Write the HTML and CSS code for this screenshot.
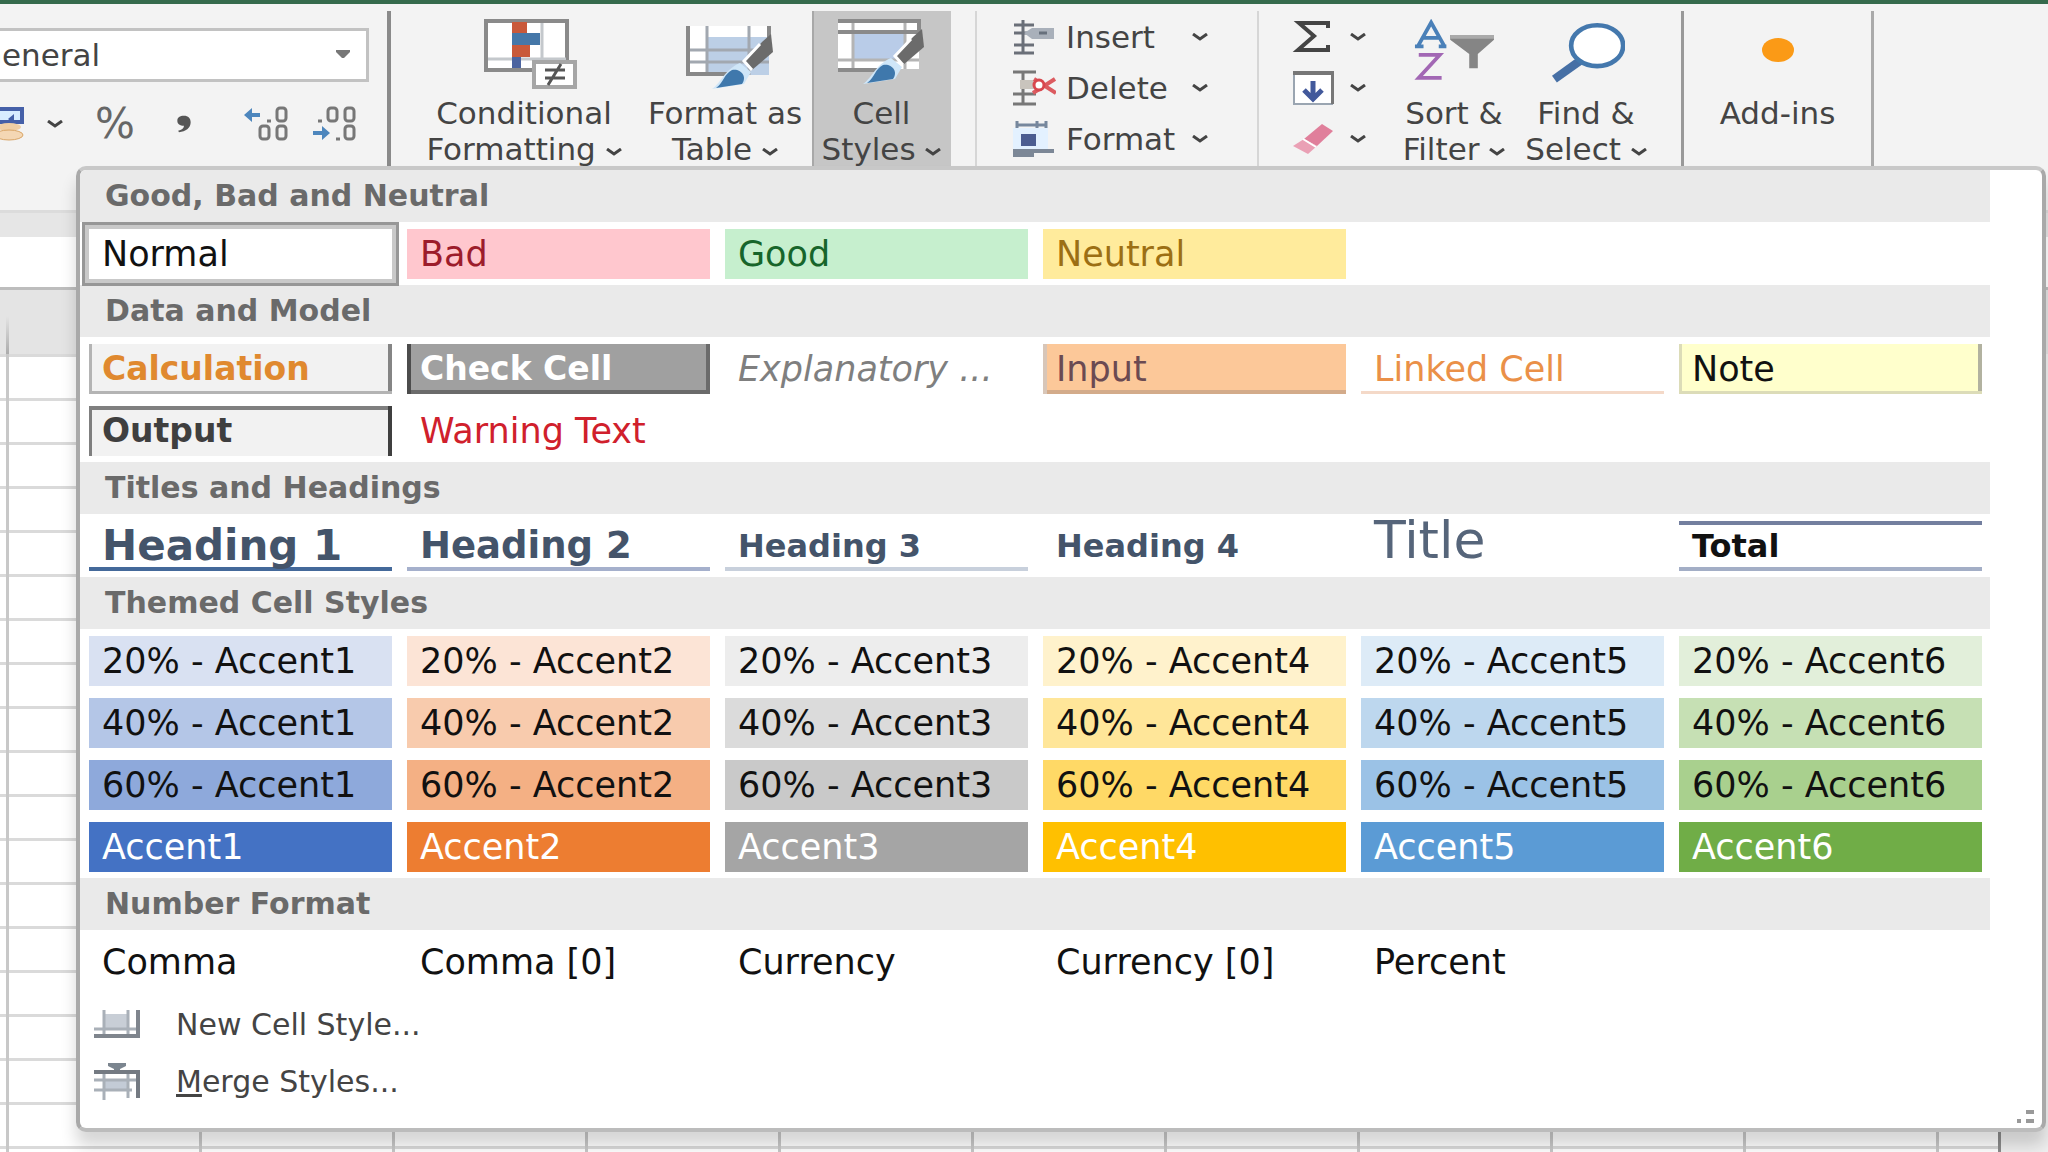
FILE: index.html
```html
<!DOCTYPE html>
<html lang="en">

<head>
    <meta charset="UTF-8">
    <title>Cell Styles</title>
    <meta name="viewport" content="width=device-width, initial-scale=1.0">
    <link rel="stylesheet" href="styles.css">
</head>

<body>
    <svg class="defs" width="0" height="0" aria-hidden="true">
        <symbol id="chevron" viewBox="0 0 16 8">
            <path d="M1 1 L8 6 L15 1" fill="none" stroke="#444" stroke-width="3" />
        </symbol>
        <symbol id="brush" viewBox="0 0 64 60">
            <path d="M61 2 L63 20 L42 38 L34 30 L52 10 Z" fill="#6b6b6b" />
            <path d="M50 12 L34 29 L42 38" fill="none" stroke="#fff" stroke-width="3" />
            <path d="M30 31 L41 40 L34 52 L2 57 C12 50 14 38 30 31 Z" fill="#cfe6f8" />
            <path d="M22 38 C30 36 38 44 32 52 L6 56 C14 50 14 42 22 38 Z" fill="#3f78ac" />
        </symbol>
    </svg>

    <header class="ribbon">
        <div class="group number-group">
            <div class="format-box">
                <select class="number-format" aria-label="Number format">
                    <option>General</option>
                </select>
                <svg class="format-arrow" width="14" height="8" viewBox="0 0 14 8">
                    <path d="M0 0 H14 V2 L8 8 H6 L0 2 Z" fill="#777" />
                </svg>
            </div>
            <div class="number-tools">
                <button type="button" class="tool" aria-label="Accounting format">
                    <svg width="24" height="34" viewBox="0 0 24 34">
                        <path d="M0 2 H22 V15 H0" fill="#d8ecff" stroke="#4560a8" stroke-width="4" />
                        <path d="M8 12 L14 7 V17 Z" fill="#4560a8" />
                        <ellipse cx="9" cy="20" rx="12" ry="4" fill="#f0cfa5" />
                        <ellipse cx="9" cy="28" rx="14" ry="5" fill="#f4d7b4" stroke="#d9a566" />
                    </svg>
                </button>
                <button type="button" class="tool" aria-label="More accounting formats"><svg class="chevron"><use href="#chevron" /></svg></button>
                <button type="button" class="tool percent">%</button>
                <button type="button" class="tool comma" aria-label="Comma style">
                    <svg width="20" height="20" viewBox="0 0 20 24">
                        <path d="M10 2 C15 2 18 5 18 10 C18 17 12 21 4 22 L3 20 C7 19 10 17 10 14 C5 14 2 12 2 8 C2 4 5 2 10 2 Z" fill="#555" />
                    </svg>
                </button>
                <button type="button" class="tool" aria-label="Increase decimal">
                    <svg width="48" height="36" viewBox="0 0 48 36">
                        <path d="M2 9 L10 2 V7 H18 V11 H10 V16 Z" fill="#4d86bd" />
                        <g fill="none" stroke="#777" stroke-width="3">
                            <path d="M25 15 H29" />
                            <rect x="35" y="2" width="9" height="13" rx="3" />
                            <rect x="18" y="20" width="9" height="13" rx="3" />
                            <rect x="35" y="20" width="9" height="13" rx="3" />
                        </g>
                    </svg>
                </button>
                <button type="button" class="tool" aria-label="Decrease decimal">
                    <svg width="48" height="36" viewBox="0 0 48 36">
                        <path d="M20 27 L12 20 V25 H3 V29 H12 V34 Z" fill="#4d86bd" />
                        <g fill="none" stroke="#777" stroke-width="3">
                            <path d="M8 15 H12 M26 33 H30" />
                            <rect x="18" y="2" width="9" height="13" rx="3" />
                            <rect x="35" y="2" width="9" height="13" rx="3" />
                            <rect x="35" y="20" width="9" height="13" rx="3" />
                        </g>
                    </svg>
                </button>
            </div>
        </div>

        <div class="group styles-group">
            <button type="button" class="big conditional">
                <span class="icon conditional-icon">
                    <svg width="94" height="70" viewBox="0 0 94 70">
                        <rect x="2" y="2" width="81" height="49" fill="#fff" stroke="#8a8a8a" stroke-width="4" />
                        <path d="M58 4 V48 M4 40 H82" stroke="#c4c8cc" stroke-width="3" />
                        <path d="M28 3 H43 V14 H28 Z M28 26 H46 V38 H28 Z" fill="#c9593a" />
                        <path d="M28 14 H56 V26 H28 Z" fill="#4577a8" />
                        <path d="M28 38 H37 V49 H28 Z" fill="#4c64a0" />
                        <rect x="50" y="43" width="41" height="25" fill="#fff" stroke="#a6a6a6" stroke-width="4" />
                        <path d="M61 51 H81 M61 59 H81 M77 45 L64 66" stroke="#555" stroke-width="3" />
                    </svg>
                </span>
                <span>Conditional</span>
                <span>Formatting <svg class="chevron"><use href="#chevron" /></svg></span>
            </button>
            <button type="button" class="big format-table">
                <span class="icon table-icon">
                    <svg width="90" height="70" viewBox="0 0 90 70">
                        <path d="M3 7 H84 V56 H3 Z" fill="#fff" />
                        <path d="M23 18 H84 V56 H23 Z" fill="#bccfe6" />
                        <path d="M22 7 V56 M64 7 V56 M3 31 H84 M3 43 H84" stroke="#a2a8b0" stroke-width="3" />
                        <path d="M3 7 V55 H60 M84 7 V30" fill="none" stroke="#888" stroke-width="4" />
                        <use href="#brush" x="25" y="13" width="64" height="60" />
                    </svg>
                </span>
                <span>Format as</span>
                <span>Table <svg class="chevron"><use href="#chevron" /></svg></span>
            </button>
            <button type="button" class="big cell-styles active" aria-expanded="true">
                <span class="icon">
                    <svg width="90" height="70" viewBox="0 0 90 70">
                        <path d="M1 2 H82 V50 H1 Z" fill="#fff" />
                        <path d="M17 13 H68 V41 H17 Z" fill="#b9cce8" />
                        <path d="M16 2 V50 M68 2 V50 M1 41 H82" stroke="#b4b4b4" stroke-width="3" />
                        <path d="M1 2 H82 V30 M1 13 H82 M1 51 H54" fill="none" stroke="#8a8a8a" stroke-width="4" />
                        <use href="#brush" x="24" y="8" width="64" height="60" />
                    </svg>
                </span>
                <span>Cell</span>
                <span>Styles <svg class="chevron"><use href="#chevron" /></svg></span>
            </button>
        </div>

        <div class="group cells-group">
            <button type="button" class="small">
                <svg width="44" height="36" viewBox="0 0 44 36">
                    <path d="M2 6 H22 M2 14 H22 M2 26 H22 M2 34 H22 M11 1 V35" stroke="#6a6f78" stroke-width="3" fill="none" />
                    <path d="M20 9 H42 V20 H20 L12 14 Z" fill="#a9b0ba" />
                    <path d="M27 14 H35" stroke="#67707c" stroke-width="3" />
                </svg>
                <span>Insert</span>
                <svg class="chevron"><use href="#chevron" /></svg>
            </button>
            <button type="button" class="small">
                <svg width="44" height="36" viewBox="0 0 44 36">
                    <path d="M1 2 H24 M1 24 H24 M1 34 H24 M11 2 V35" stroke="#777" stroke-width="3" fill="none" />
                    <path d="M8 10 H24 V19 H8 Z" fill="#c9c4bd" />
                    <path d="M22 9 L44 23 M43 9 L21 23" stroke="#dc5b60" stroke-width="4" />
                    <circle cx="27" cy="15" r="5" fill="#fff" stroke="#d8474e" stroke-width="3" />
                </svg>
                <span>Delete</span>
                <svg class="chevron"><use href="#chevron" /></svg>
            </button>
            <button type="button" class="small">
                <svg width="44" height="38" viewBox="0 0 44 38">
                    <path d="M1 8 H36 V30 H1 Z" fill="#e3f1ff" />
                    <path d="M4 5 H34 M5 1 V8 M25 1 V8 M34 1 V8" stroke="#76879d" stroke-width="3" />
                    <rect x="9" y="14" width="15" height="12" fill="#4c5d91" />
                    <path d="M1 31 H42 M1 35 H22" stroke="#7c8796" stroke-width="4" />
                </svg>
                <span>Format</span>
                <svg class="chevron"><use href="#chevron" /></svg>
            </button>
        </div>

        <div class="group editing-group">
            <div class="editing-tools">
                <button type="button" class="small" aria-label="AutoSum">
                    <svg width="42" height="36" viewBox="0 0 42 36">
                        <path d="M36 9 V4 H7 L22 17 L6 31 H36 V26" fill="none" stroke="#444" stroke-width="4" />
                    </svg>
                    <svg class="chevron"><use href="#chevron" /></svg>
                </button>
                <button type="button" class="small" aria-label="Fill">
                    <svg width="42" height="36" viewBox="0 0 42 36">
                        <rect x="2" y="3" width="38" height="31" fill="#fff" stroke="#9aa5b1" stroke-width="2" />
                        <path d="M1 3 H41 V34" fill="none" stroke="#777" stroke-width="4" />
                        <path d="M21 11 V29 M12 20 L21 29 L30 20" fill="none" stroke="#42599b" stroke-width="5" />
                    </svg>
                    <svg class="chevron"><use href="#chevron" /></svg>
                </button>
                <button type="button" class="small" aria-label="Clear">
                    <svg width="42" height="36" viewBox="0 0 42 36">
                        <path d="M30 3 L41 10 L25 25 L12 18 Z" fill="#e07f9b" />
                        <path d="M12 18 L25 25 L16 33 L1 25 Z" fill="#eaa0b5" />
                        <path d="M11 18 L24 26" stroke="#fff" stroke-width="2" />
                    </svg>
                    <svg class="chevron"><use href="#chevron" /></svg>
                </button>
            </div>
            <button type="button" class="big sort">
                <span class="icon">
                    <svg width="80" height="70" viewBox="0 0 84 70">
                        <path d="M4 27 L18 2 L32 27 M9 18 H27 M1 27 H10 M26 27 H34" fill="none" stroke="#4a80b8" stroke-width="4" />
                        <path d="M5 36 H27 L5 60 H29" fill="none" stroke="#a267b4" stroke-width="4" />
                        <path d="M38 15 H84 V20 L67 35 V50 H58 V35 L38 20 Z" fill="#858585" />
                        <path d="M38 17 H84" stroke="#aaa" stroke-width="4" />
                    </svg>
                </span>
                <span>Sort &amp;</span>
                <span>Filter <svg class="chevron"><use href="#chevron" /></svg></span>
            </button>
            <button type="button" class="big find">
                <span class="icon">
                    <svg width="78" height="70" viewBox="-2 0 84 70">
                        <path d="M34 42 L6 62" stroke="#466fa5" stroke-width="9" />
                        <ellipse cx="52" cy="26" rx="28" ry="22" fill="#fff" stroke="#4478ad" stroke-width="5" />
                    </svg>
                </span>
                <span>Find &amp;</span>
                <span>Select <svg class="chevron"><use href="#chevron" /></svg></span>
            </button>
        </div>

        <div class="group addins-group">
            <button type="button" class="big addins">
                <span class="icon">
                    <svg width="40" height="70" viewBox="0 0 40 70">
                        <ellipse cx="20" cy="31" rx="16" ry="12" fill="#fb9a16" />
                    </svg>
                </span>
                <span>Add-ins</span>
            </button>
        </div>
    </header>

    <main class="sheet">
        <div class="ribbon-foot"></div>
        <div class="spacer-bar"></div>
        <div class="formula-bar"></div>
        <div class="column-header"></div>
        <div class="grid">
            <div class="scrollbar"></div>
        </div>
    </main>

    <div class="popup">
        <div class="gallery">
            <h2>Good, Bad and Neutral</h2>
            <div class="cells">
                <button type="button" class="cell selected">Normal</button>
                <button type="button" class="cell bad">Bad</button>
                <button type="button" class="cell good">Good</button>
                <button type="button" class="cell neutral">Neutral</button>
            </div>

            <h2>Data and Model</h2>
            <div class="cells">
                <button type="button" class="cell calculation">Calculation</button>
                <button type="button" class="cell check">Check Cell</button>
                <button type="button" class="cell explanatory">Explanatory ...</button>
                <button type="button" class="cell input">Input</button>
                <button type="button" class="cell linked">Linked Cell</button>
                <button type="button" class="cell note">Note</button>
                <button type="button" class="cell output">Output</button>
                <button type="button" class="cell warning">Warning Text</button>
            </div>

            <h2>Titles and Headings</h2>
            <div class="cells">
                <button type="button" class="cell heading1">Heading 1</button>
                <button type="button" class="cell heading2">Heading 2</button>
                <button type="button" class="cell heading3">Heading 3</button>
                <button type="button" class="cell heading4">Heading 4</button>
                <button type="button" class="cell title">Title</button>
                <button type="button" class="cell total">Total</button>
            </div>

            <h2>Themed Cell Styles</h2>
            <div class="cells">
                <button type="button" class="cell a1-20">20% - Accent1</button>
                <button type="button" class="cell a2-20">20% - Accent2</button>
                <button type="button" class="cell a3-20">20% - Accent3</button>
                <button type="button" class="cell a4-20">20% - Accent4</button>
                <button type="button" class="cell a5-20">20% - Accent5</button>
                <button type="button" class="cell a6-20">20% - Accent6</button>
                <button type="button" class="cell a1-40">40% - Accent1</button>
                <button type="button" class="cell a2-40">40% - Accent2</button>
                <button type="button" class="cell a3-40">40% - Accent3</button>
                <button type="button" class="cell a4-40">40% - Accent4</button>
                <button type="button" class="cell a5-40">40% - Accent5</button>
                <button type="button" class="cell a6-40">40% - Accent6</button>
                <button type="button" class="cell a1-60">60% - Accent1</button>
                <button type="button" class="cell a2-60">60% - Accent2</button>
                <button type="button" class="cell a3-60">60% - Accent3</button>
                <button type="button" class="cell a4-60">60% - Accent4</button>
                <button type="button" class="cell a5-60">60% - Accent5</button>
                <button type="button" class="cell a6-60">60% - Accent6</button>
                <button type="button" class="cell accent a1">Accent1</button>
                <button type="button" class="cell accent a2">Accent2</button>
                <button type="button" class="cell accent a3">Accent3</button>
                <button type="button" class="cell accent a4">Accent4</button>
                <button type="button" class="cell accent a5">Accent5</button>
                <button type="button" class="cell accent a6">Accent6</button>
            </div>

            <h2>Number Format</h2>
            <div class="cells">
                <button type="button" class="cell">Comma</button>
                <button type="button" class="cell">Comma [0]</button>
                <button type="button" class="cell">Currency</button>
                <button type="button" class="cell">Currency [0]</button>
                <button type="button" class="cell">Percent</button>
            </div>
        </div>

        <div class="menu">
            <button type="button" class="menu-item">
                <svg width="48" height="40" viewBox="0 0 48 40">
                    <path d="M11 9 H33 V24 H11 Z" fill="#c8ced6" />
                    <path d="M10 5 V31 M34 5 V31 M0 24 H46" stroke="#a9b0b8" stroke-width="3" />
                    <path d="M0 31 H46 M44 5 V32" stroke="#7f858d" stroke-width="4" />
                </svg>
                <span>New Cell Style...</span>
            </button>
            <button type="button" class="menu-item">
                <svg width="48" height="40" viewBox="0 0 48 40">
                    <path d="M14 1 H32 V4 L26 7 V10 H20 V7 L14 4 Z" fill="#7b858f" />
                    <path d="M11 19 H33 V28 H11 Z" fill="#c3cbd6" />
                    <path d="M10 10 V38 M34 10 V36 M0 18 H42 M0 28 H38" stroke="#a9b0b8" stroke-width="3" />
                    <path d="M0 10 H46 M44 10 V36" stroke="#747a82" stroke-width="4" />
                </svg>
                <span><u>M</u>erge Styles...</span>
            </button>
        </div>
        <svg class="grip" width="20" height="14" viewBox="0 0 20 14">
            <path d="M10 2 H18 M1 11 H5 M10 11 H18" stroke="#999" stroke-width="4" />
        </svg>
    </div>
</body>

</html>
```
FILE: styles.css
```css
* {
    box-sizing: border-box;
}

html,
body {
    height: 100%;
    margin: 0;
    padding: 0;
}

body {
    position: relative;
    display: flex;
    flex-direction: column;
    overflow: hidden;
    background: #fff;
    color: #444;
    font-family: 'DejaVu Sans', Verdana, sans-serif;
}

button {
    margin: 0;
    padding: 0;
    border: none;
    background: none;
    color: inherit;
    font: inherit;
    cursor: pointer;
}

.defs {
    position: absolute;
}

/* ribbon */
.ribbon {
    display: flex;
    flex: none;
    height: 167px;
    padding-top: 7px;
    border-top: 4px solid #356a4c;
    background: #f3f3f3;
    font-size: 31px;
    line-height: 36px;
}

.group {
    display: flex;
    flex: none;
}

.chevron {
    flex: none;
    width: 16px;
    height: 8px;
    vertical-align: middle;
}

.number-group {
    flex-direction: column;
    width: 391px;
    border-right: 4px solid #8a8a8a;
}

.format-box {
    position: relative;
    width: 369px;
    margin-top: 17px;
}

.number-format {
    display: block;
    width: 410px;
    height: 54px;
    margin-left: -41px;
    padding: 0 16px;
    border: 3px solid #c2c2c2;
    border-radius: 0;
    appearance: none;
    background: #fff;
    color: #444;
    font: inherit;
}

.format-arrow {
    position: absolute;
    top: 22px;
    right: 19px;
    pointer-events: none;
}

.number-tools {
    display: grid;
    grid-template-columns: 24px 62px 58px 80px 84px 52px;
    align-items: center;
    margin-top: 22px;
    height: 40px;
}

.tool {
    display: flex;
    align-items: center;
    justify-content: center;
}

.percent {
    font-size: 42px;
    color: #666;
}

.styles-group {
    padding: 0 24px 0 12px;
    border-right: 2px solid #d6d6d6;
}

.big {
    display: flex;
    flex-direction: column;
    align-items: center;
    padding-top: 8px;
    white-space: nowrap;
}

.big .icon {
    height: 76px;
}

.conditional {
    width: 242px;
}

.conditional-icon {
    padding-left: 14px;
}

.format-table {
    width: 160px;
    margin-right: 7px;
}

.table-icon {
    padding-left: 10px;
}

.cell-styles {
    width: 139px;
}

.active {
    background: #c6c6c6;
    box-shadow: inset 2px 0 #a8a8a8;
}

.cells-group {
    flex-direction: column;
    width: 282px;
    padding-left: 35px;
    border-right: 2px solid #d6d6d6;
}

.small {
    display: flex;
    align-items: center;
    gap: 10px;
    height: 51px;
}

.cells-group .small {
    width: 196px;
}

.small .chevron {
    margin-left: auto;
}

.editing-group {
    width: 425px;
    padding-left: 33px;
    border-right: 3px solid #999;
}

.editing-tools {
    width: 74px;
    margin-right: 26px;
}

.editing-tools .small {
    width: 100%;
}

.sort {
    width: 124px;
    margin-right: 8px;
}

.find {
    width: 124px;
}

.addins-group {
    width: 190px;
    border-right: 3px solid #aaa;
}

.addins {
    width: 100%;
}

/* worksheet behind the gallery */
.sheet {
    display: flex;
    flex: 1;
    flex-direction: column;
}

.ribbon-foot {
    height: 43px;
    background: #f3f3f3;
}

.spacer-bar {
    height: 27px;
    border-top: 3px solid #dcdcdc;
    background: #e6e6e6;
}

.formula-bar {
    height: 50px;
    background: #fff;
}

.column-header {
    height: 67px;
    border-top: 3px solid #bdbdbd;
    background: linear-gradient(transparent 26px, #a8a8a8 66px) no-repeat 6px 0 / 3px 100% #e4e4e4;
}

.grid {
    display: flex;
    flex: 1;
    justify-content: flex-end;
    background-color: #fff;
    background-image: linear-gradient(90deg, #c8c8c8 3px, transparent 3px), linear-gradient(#dadada 3px, transparent 3px);
    background-position: 6px 0, 0 44px;
    background-size: 193px 100%, 100% 44px;
}

.scrollbar {
    width: 50px;
    border-left: 3px solid #8c8c8c;
    background: #f0f0f0;
}

/* cell styles gallery */
.popup {
    position: absolute;
    top: 166px;
    left: 76px;
    right: 2px;
    border: 4px solid #a9a9a9;
    border-top-color: #c8c8c8;
    border-bottom-color: #bcbcbc;
    border-radius: 10px;
    background: #fff;
    box-shadow: 0 14px 16px rgba(0, 0, 0, 0.16);
    overflow: hidden;
}

.gallery {
    margin-right: 52px;
}

.gallery h2 {
    margin: 0;
    padding-left: 25px;
    background: #eaeaea;
    color: #6a6a6a;
    font-size: 30px;
    font-weight: bold;
    line-height: 52px;
}

.cells {
    display: grid;
    grid-template-columns: repeat(6, 1fr);
    gap: 12px 15px;
    padding: 7px 8px 6px 9px;
}

.cell {
    height: 50px;
    padding: 0 0 0 13px;
    border: 0 solid transparent;
    color: #111;
    font-size: 35px;
    line-height: 46px;
    text-align: left;
    white-space: nowrap;
}

.selected {
    background: #fff;
    box-shadow: 0 0 0 4px #c9c9c9, 0 0 0 7px #979797;
}

.bad {
    background: #ffc7ce;
    color: #9c1c2b;
}

.good {
    background: #c6efce;
    color: #17652a;
}

.neutral {
    background: #ffeb9c;
    color: #9c6f14;
}

.calculation,
.check,
.output {
    font-size: 33px;
    font-weight: bold;
}

.calculation {
    background: #f2f2f2;
    box-shadow: inset 3px -3px #b4b4b4, inset -4px 0 #858585;
    color: #e0892f;
}

.check {
    background: #a0a0a0;
    box-shadow: inset 4px 0 #4c4c4c, inset -4px -4px #6b6b6b;
    color: #fff;
}

.explanatory {
    color: #7f7f7f;
    font-style: italic;
}

.input {
    background: #fcc899;
    box-shadow: inset 4px 0 #d8c6b8, inset 0 -4px #d3ab8a;
    color: #6b4a52;
}

.linked {
    box-shadow: inset 0 -3px #f4d9c8;
    color: #ea9048;
}

.note {
    background: #ffffcc;
    box-shadow: inset 3px -3px #dcdcb8, inset -4px 0 #b2b2a0;
}

.output {
    background: #f2f2f2;
    box-shadow: inset -4px 0 #3f3f3f, inset 3px 4px #7f7f7f;
    color: #3f3f3f;
}

.warning {
    color: #d0202c;
}

.heading1,
.heading2,
.heading3,
.heading4 {
    color: #44546a;
    font-weight: bold;
}

.heading1 {
    box-shadow: inset 0 -4px #44699a;
    font-size: 42px;
}

.heading2 {
    box-shadow: inset 0 -4px #a5b0cc;
    font-size: 37px;
}

.heading3 {
    box-shadow: inset 0 -4px #c8d0dc;
    font-size: 32px;
}

.heading4 {
    font-size: 32px;
}

.title {
    padding-bottom: 12px;
    color: #56657a;
    font-size: 52px;
    font-weight: normal;
    line-height: 36px;
}

.total {
    box-shadow: inset 0 4px #737f9f, inset 0 -4px #a3aec6;
    font-size: 32px;
    font-weight: bold;
}

.a1-20 { background: #d9e1f2; }
.a2-20 { background: #fce4d6; }
.a3-20 { background: #ededed; }
.a4-20 { background: #fff2cc; }
.a5-20 { background: #ddebf7; }
.a6-20 { background: #e2efda; }

.a1-40 { background: #b4c6e7; }
.a2-40 { background: #f8cbad; }
.a3-40 { background: #dbdbdb; }
.a4-40 { background: #ffe699; }
.a5-40 { background: #bdd7ee; }
.a6-40 { background: #c6e0b4; }

.a1-60 { background: #8ea9db; }
.a2-60 { background: #f4b084; }
.a3-60 { background: #c9c9c9; }
.a4-60 { background: #ffd966; }
.a5-60 { background: #9bc2e6; }
.a6-60 { background: #a9d08e; }

.accent { color: #fff; }
.a1 { background: #4472c4; }
.a2 { background: #ed7d31; }
.a3 { background: #a5a5a5; }
.a4 { background: #ffc000; }
.a5 { background: #5b9bd5; }
.a6 { background: #70ad47; }

.menu {
    padding: 3px 0 18px 14px;
    color: #444;
    font-size: 30px;
}

.menu-item {
    display: flex;
    align-items: center;
    gap: 34px;
    height: 57px;
}

.grip {
    position: absolute;
    right: 6px;
    bottom: 4px;
}
```
